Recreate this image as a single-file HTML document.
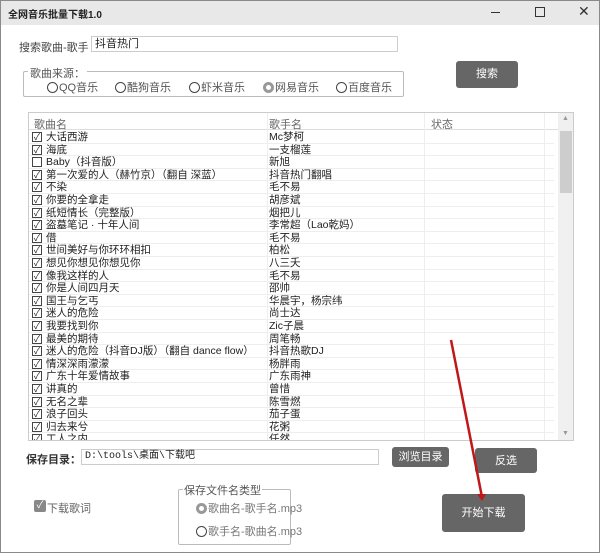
<!DOCTYPE html>
<html><head><meta charset="utf-8"><style>
*{margin:0;padding:0;box-sizing:border-box}
body{width:600px;height:553px;background:#fff;font-family:"Liberation Sans","Noto Sans CJK SC",sans-serif;font-size:11px;color:#222;position:relative;overflow:hidden}
.a{position:absolute}
.win{left:0;top:0;width:600px;height:553px;border:1px solid #8a8a8a}
.title{left:1px;top:1px;width:598px;height:24px;background:#e8e8e8}
.btn{background:#666;color:#fff;border-radius:3px;text-align:center;font-size:11px}
.row{position:absolute;left:0;width:525px;height:12.6px;border-bottom:1px solid #eee;font-size:10.5px;line-height:12.6px;white-space:nowrap;overflow:hidden}
.cb{position:absolute;left:3px;top:1px;width:10px;height:10px;border:1px solid #444;font-size:9px;line-height:8px;text-align:center}
.rad{display:inline-block;width:11px;height:11px;border:1.5px solid #444;border-radius:50%;vertical-align:-2px;margin-right:1px}
</style></head><body>
<div class="a win"></div>
<div class="a title"></div>
<div class="a" style="left:8px;top:6px;font-size:10px;font-weight:bold">全网音乐批量下载1.0</div>
<div class="a" style="left:491px;top:12px;width:9px;height:1px;background:#333"></div>
<div class="a" style="left:535px;top:7px;width:10px;height:10px;border:1px solid #333"></div>
<div class="a" style="left:578px;top:3px;font-size:14px;color:#333">✕</div>

<div class="a" style="left:19px;top:39px;color:#444">搜索歌曲-歌手</div>
<div class="a" style="left:91px;top:36px;width:307px;height:16px;border:1px solid #ccc;padding-left:3px;line-height:14px">抖音热门</div>

<div class="a" style="left:23px;top:71px;width:381px;height:26px;border:1px solid #bbb;border-radius:2px"></div>
<div class="a" style="left:28px;top:65px;background:#fff;padding:0 2px;color:#555">歌曲来源：</div>
<div class="a" style="left:47px;top:79px;color:#555"><span class="rad"></span>QQ音乐</div>
<div class="a" style="left:115px;top:79px;color:#555"><span class="rad"></span>酷狗音乐</div>
<div class="a" style="left:189px;top:79px;color:#555"><span class="rad"></span>虾米音乐</div>
<div class="a" style="left:263px;top:79px;color:#555"><span class="rad" style="border:3px solid #999;background:#fff"></span>网易音乐</div>
<div class="a" style="left:336px;top:79px;color:#555"><span class="rad"></span>百度音乐</div>
<div class="a btn" style="left:456px;top:61px;width:62px;height:27px;line-height:27px">搜索</div>

<div class="a" style="left:28px;top:112px;width:546px;height:329px;border:1px solid #ccc;overflow:hidden">
 <div class="a" style="left:0;top:0;width:530px;height:17px;border-bottom:1px solid #ddd;color:#666">
  <span class="a" style="left:5px;top:3px">歌曲名</span><span class="a" style="left:240px;top:3px">歌手名</span><span class="a" style="left:402px;top:3px">状态</span></div>
 <div class="a" style="left:238px;top:0;width:1px;height:330px;background:#eee"></div>
 <div class="a" style="left:395px;top:0;width:1px;height:330px;background:#eee"></div>
 <div class="a" style="left:515px;top:0;width:1px;height:330px;background:#eee"></div>
 <div class="a" style="left:529px;top:0;width:16px;height:329px;background:#f0f0f0"></div>
 <div class="a" style="left:531px;top:18px;width:12px;height:62px;background:#cdcdcd"></div>
 <div class="a" style="left:533px;top:2px;font-size:7px;color:#999">▲</div>
 <div class="a" style="left:533px;top:317px;font-size:7px;color:#999">▼</div>
 <div class="a" style="left:0;top:18px;width:529px;height:311px">
<div class="row" style="top:0px"><span class="cb">✓</span><span class="a" style="left:17px">大话西游</span><span class="a" style="left:240px">Mc梦柯</span></div>
<div class="row" style="top:12.6px"><span class="cb">✓</span><span class="a" style="left:17px">海底</span><span class="a" style="left:240px">一支榴莲</span></div>
<div class="row" style="top:25.2px"><span class="cb"></span><span class="a" style="left:17px">Baby（抖音版）</span><span class="a" style="left:240px">新旭</span></div>
<div class="row" style="top:37.8px"><span class="cb">✓</span><span class="a" style="left:17px">第一次爱的人（赫竹京）（翻自 深蓝）</span><span class="a" style="left:240px">抖音热门翻唱</span></div>
<div class="row" style="top:50.4px"><span class="cb">✓</span><span class="a" style="left:17px">不染</span><span class="a" style="left:240px">毛不易</span></div>
<div class="row" style="top:63px"><span class="cb">✓</span><span class="a" style="left:17px">你要的全拿走</span><span class="a" style="left:240px">胡彦斌</span></div>
<div class="row" style="top:75.6px"><span class="cb">✓</span><span class="a" style="left:17px">纸短情长（完整版）</span><span class="a" style="left:240px">烟把儿</span></div>
<div class="row" style="top:88.2px"><span class="cb">✓</span><span class="a" style="left:17px">盗墓笔记 · 十年人间</span><span class="a" style="left:240px">李常超（Lao乾妈）</span></div>
<div class="row" style="top:100.8px"><span class="cb">✓</span><span class="a" style="left:17px">借</span><span class="a" style="left:240px">毛不易</span></div>
<div class="row" style="top:113.4px"><span class="cb">✓</span><span class="a" style="left:17px">世间美好与你环环相扣</span><span class="a" style="left:240px">柏松</span></div>
<div class="row" style="top:126px"><span class="cb">✓</span><span class="a" style="left:17px">想见你想见你想见你</span><span class="a" style="left:240px">八三夭</span></div>
<div class="row" style="top:138.6px"><span class="cb">✓</span><span class="a" style="left:17px">像我这样的人</span><span class="a" style="left:240px">毛不易</span></div>
<div class="row" style="top:151.2px"><span class="cb">✓</span><span class="a" style="left:17px">你是人间四月天</span><span class="a" style="left:240px">邵帅</span></div>
<div class="row" style="top:163.8px"><span class="cb">✓</span><span class="a" style="left:17px">国王与乞丐</span><span class="a" style="left:240px">华晨宇，杨宗纬</span></div>
<div class="row" style="top:176.4px"><span class="cb">✓</span><span class="a" style="left:17px">迷人的危险</span><span class="a" style="left:240px">尚士达</span></div>
<div class="row" style="top:189px"><span class="cb">✓</span><span class="a" style="left:17px">我要找到你</span><span class="a" style="left:240px">Zic子晨</span></div>
<div class="row" style="top:201.6px"><span class="cb">✓</span><span class="a" style="left:17px">最美的期待</span><span class="a" style="left:240px">周笔畅</span></div>
<div class="row" style="top:214.2px"><span class="cb">✓</span><span class="a" style="left:17px">迷人的危险（抖音DJ版）（翻自 dance flow）</span><span class="a" style="left:240px">抖音热歌DJ</span></div>
<div class="row" style="top:226.8px"><span class="cb">✓</span><span class="a" style="left:17px">情深深雨濛濛</span><span class="a" style="left:240px">杨胖雨</span></div>
<div class="row" style="top:239.4px"><span class="cb">✓</span><span class="a" style="left:17px">广东十年爱情故事</span><span class="a" style="left:240px">广东雨神</span></div>
<div class="row" style="top:252px"><span class="cb">✓</span><span class="a" style="left:17px">讲真的</span><span class="a" style="left:240px">曾惜</span></div>
<div class="row" style="top:264.6px"><span class="cb">✓</span><span class="a" style="left:17px">无名之辈</span><span class="a" style="left:240px">陈雪燃</span></div>
<div class="row" style="top:277.2px"><span class="cb">✓</span><span class="a" style="left:17px">浪子回头</span><span class="a" style="left:240px">茄子蛋</span></div>
<div class="row" style="top:289.8px"><span class="cb">✓</span><span class="a" style="left:17px">归去来兮</span><span class="a" style="left:240px">花粥</span></div>
<div class="row" style="top:302.4px"><span class="cb">✓</span><span class="a" style="left:17px">工人之内</span><span class="a" style="left:240px">任然</span></div>
 </div>
</div>

<div class="a" style="left:26px;top:451px;font-weight:bold;color:#333">保存目录：</div>
<div class="a" style="left:81px;top:449px;width:298px;height:16px;border:1px solid #ccc;padding-left:3px;line-height:14px;font-family:'Liberation Mono','Noto Sans CJK SC',monospace;font-size:10px">D:\tools\桌面\下载吧</div>
<div class="a btn" style="left:392px;top:447px;width:57px;height:20px;line-height:20px">浏览目录</div>
<div class="a btn" style="left:475px;top:448px;width:62px;height:25px;line-height:27px">反选</div>

<div class="a" style="left:34px;top:500px;width:12px;height:12px;background:#888;border-radius:2px;color:#fff;font-size:10px;line-height:12px;text-align:center">✓</div>
<div class="a" style="left:47px;top:500px;color:#666">下载歌词</div>

<div class="a" style="left:178px;top:489px;width:113px;height:56px;border:1px solid #bbb;border-radius:2px"></div>
<div class="a" style="left:183px;top:482px;background:#fff;padding:0 1px;color:#555">保存文件名类型</div>
<div class="a" style="left:196px;top:500px;color:#777"><span class="rad" style="border:3px solid #999"></span>歌曲名-歌手名.mp3</div>
<div class="a" style="left:196px;top:523px;color:#777"><span class="rad"></span>歌手名-歌曲名.mp3</div>

<div class="a btn" style="left:442px;top:494px;width:83px;height:38px;line-height:38px">开始下载</div>

<svg class="a" style="left:0;top:0" width="600" height="553"><line x1="451" y1="340" x2="482" y2="497" stroke="#c01818" stroke-width="2.5"/><polygon points="477,494 486,494 482,501" fill="#c01818"/></svg>
</body></html>
